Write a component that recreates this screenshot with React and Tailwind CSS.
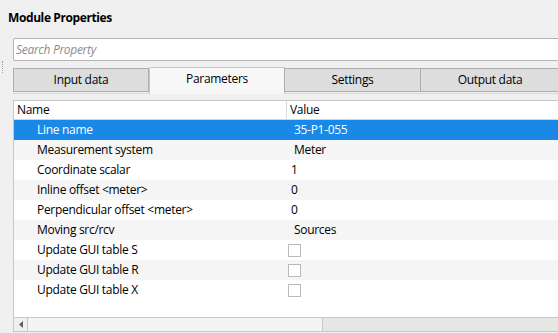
import React from 'react';

const rows = [
  { name: 'Line name', value: '35-P1-055', pad: 'pl-[6px]' },
  { name: 'Measurement system', value: 'Meter', pad: 'pl-[6px]' },
  { name: 'Coordinate scalar', value: '1', pad: 'pl-[3px]' },
  { name: 'Inline offset <meter>', value: '0', pad: 'pl-[3px]' },
  { name: 'Perpendicular offset <meter>', value: '0', pad: 'pl-[3px]' },
  { name: 'Moving src/rcv', value: 'Sources', pad: 'pl-[6px]' },
  { name: 'Update GUI table S', check: true },
  { name: 'Update GUI table R', check: true },
  { name: 'Update GUI table X', check: true },
];

const tabs = [
  { label: 'Input data', w: 'w-[136px]' },
  { label: 'Parameters', w: 'w-[136px]', active: true },
  { label: 'Settings', w: 'w-[137px]' },
  { label: 'Output data', w: 'w-[140px]' },
];

const App = () => {
  return (
    <div
      className="w-[558px] h-[333px] bg-[#f0f0f0] overflow-hidden text-[12px] text-black tracking-[-0.3px]"
      style={{ fontFamily: '"Open Sans", "Noto Sans", sans-serif' }}
    >
      {/* Title */}
      <div className="h-[38px] pl-[8px] pt-[9px] font-bold text-[12px] tracking-[-0.4px]">Module Properties</div>

      <div className="flex">
        {/* Left gutter with splitter handle */}
        <div className="w-[13px] shrink-0 flex flex-col">
          <div className="h-[23px]" />
          <div className="ml-[2px] h-[12px] border-l border-dotted border-[#a0a0a0]" />
        </div>

        <div className="flex flex-col">
          {/* Search */}
          <div className="w-[560px] h-[23px] bg-white border border-[#b4b4b4] rounded-[2px] flex items-center pl-[2px]">
            <span className="italic text-[#8c8c8c]">Search Property</span>
          </div>

          {/* Tabs */}
          <div className="flex items-end h-[33px] border-b border-[#d9d9d9]">
            {tabs.map((t) =>
              t.active ? (
                <div
                  key={t.label}
                  className={`${t.w} h-[27px] bg-[#f7f7f7] border border-b-0 border-[#c8c8c8] rounded-t-[2px] flex items-center justify-center -mb-px pb-[4px]`}
                >
                  {t.label}
                </div>
              ) : (
                <div
                  key={t.label}
                  className={`${t.w} h-[24px] mb-[1px] bg-[#dddddd] border border-[#adadad] -ml-px first:ml-0 flex items-center justify-center`}
                >
                  {t.label}
                </div>
              )
            )}
          </div>

          {/* Table */}
          <div className="mt-[6px] w-[560px] h-[232px] bg-white border border-[#c8c8c8] flex flex-col">
            <div className="h-[19px] flex border-b border-[#d5d5d5] bg-white shrink-0">
              <div className="w-[273px] pl-[3px] border-r border-[#dcdcdc] flex items-center">Name</div>
              <div className="pl-[3px] flex items-center">Value</div>
            </div>
            <div className="flex-1 flex flex-col">
              {rows.map((r, i) => {
                const sel = i === 0;
                const bg = sel ? 'bg-[#1a88e6] text-white' : i % 2 === 1 ? 'bg-[#f5f5f5]' : 'bg-white';
                return (
                  <div key={r.name} className={`h-[20px] shrink-0 flex items-center ${bg}`}>
                    <div className="w-[274px] pl-[23px]">{r.name}</div>
                    {r.check ? (
                      <div className="w-[13px] h-[13px] border border-[#b9b9b9] bg-white" />
                    ) : (
                      <div className={r.pad}>{r.value}</div>
                    )}
                  </div>
                );
              })}
            </div>
            {/* Horizontal scrollbar */}
            <div className="h-[14px] border-t border-[#c8c8c8] flex shrink-0">
              <div className="w-[14px] border-r border-[#c8c8c8] flex items-center justify-center bg-[#f0f0f0]">
                <svg width="4" height="7" viewBox="0 0 4 7">
                  <path d="M4 0 L0 3.5 L4 7 Z" fill="#606060" />
                </svg>
              </div>
              <div className="w-[295px] bg-[#f4f4f4] border-r border-[#c8c8c8]" />
              <div className="flex-1 bg-[#e6e6e6]" />
            </div>
          </div>
        </div>
      </div>
    </div>
  );
};

export default App;
